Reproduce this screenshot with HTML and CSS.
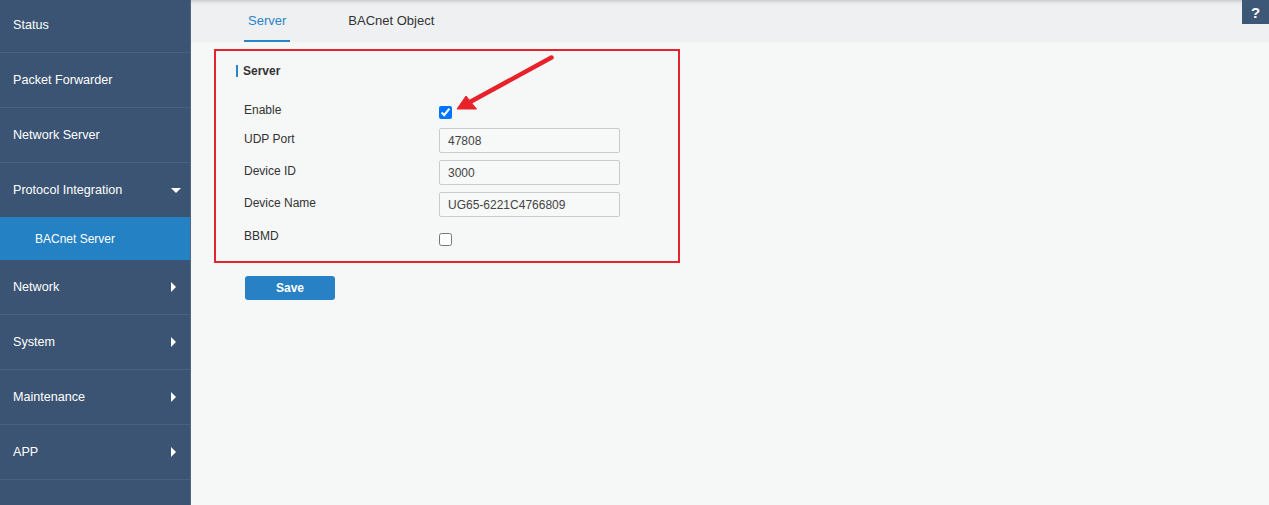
FILE: index.html
```html
<!DOCTYPE html>
<html>
<head>
<meta charset="utf-8">
<link rel="stylesheet" href="styles.css">
</head>
<body>
<div class="app">
  <nav class="sidebar">
    <ul class="menu">
      <li class="item first"><span>Status</span></li>
      <li class="item"><span>Packet Forwarder</span></li>
      <li class="item"><span>Network Server</span></li>
      <li class="item"><span>Protocol Integration</span><i class="caret-down"></i></li>
      <li class="sub active"><span>BACnet Server</span></li>
      <li class="item"><span>Network</span><i class="caret-right"></i></li>
      <li class="item"><span>System</span><i class="caret-right"></i></li>
      <li class="item"><span>Maintenance</span><i class="caret-right"></i></li>
      <li class="item"><span>APP</span><i class="caret-right"></i></li>
    </ul>
  </nav>
  <main class="main">
    <header class="tabbar">
      <div class="tab active">Server</div>
      <div class="tab">BACnet Object</div>
      <div class="help">?</div>
    </header>
    <div class="content">
      <section class="panel">
        <h2 class="panel-title">Server</h2>
        <div class="row row-enable">
          <label class="lbl">Enable</label>
          <input type="checkbox" class="chk" checked>
        </div>
        <div class="row">
          <label class="lbl">UDP Port</label>
          <input type="text" class="txt" value="47808">
        </div>
        <div class="row">
          <label class="lbl">Device ID</label>
          <input type="text" class="txt" value="3000">
        </div>
        <div class="row">
          <label class="lbl">Device Name</label>
          <input type="text" class="txt" value="UG65-6221C4766809">
        </div>
        <div class="row row-bbmd">
          <label class="lbl">BBMD</label>
          <input type="checkbox" class="chk">
        </div>
      </section>
      <button class="save">Save</button>
    </div>
    <svg class="arrow" width="120" height="70" viewBox="0 0 120 70">
      <line x1="100.5" y1="9.5" x2="19" y2="54" stroke="#e8222b" stroke-width="4.5" stroke-linecap="round"/>
      <polygon points="6,61 15,48 25.5,61" fill="#e8222b" stroke="#e8222b" stroke-width="1" stroke-linejoin="round"/>
    </svg>
  </main>
</div>
</body>
</html>
```

FILE: styles.css
```css
* { box-sizing: border-box; }
html, body { margin: 0; padding: 0; }
body {
  font-family: "Liberation Sans", Arial, sans-serif;
  color: #333;
  background: #f6f7f7;
}
.app {
  display: flex;
  height: 505px;
  overflow: hidden;
}
.sidebar {
  width: 191px;
  flex: none;
  background: #3b5473;
  border-right: 1px solid #51677f;
  overflow: hidden;
}
.menu {
  list-style: none;
  margin: -2px 0 0 0;
  padding: 0;
}
.item {
  height: 55px;
  border-bottom: 1px solid #4a6180;
  display: flex;
  align-items: center;
  justify-content: space-between;
  padding: 0 10px 0 13px;
  color: #fff;
  font-size: 12.6px;
}
.item.first { height: 55px; }
.sub {
  height: 43px;
  display: flex;
  align-items: center;
  padding-left: 35px;
  color: #fff;
  font-size: 12px;
}
.sub.active { background: #2481c3; margin-top: -1px; }
.caret-down {
  width: 0; height: 0;
  border-left: 5px solid transparent;
  border-right: 5px solid transparent;
  border-top: 5px solid #fff;
  margin-right: -1px;
}
.caret-right {
  width: 0; height: 0;
  border-top: 5px solid transparent;
  border-bottom: 5px solid transparent;
  border-left: 5px solid #fff;
  margin-right: 4px;
}
.main {
  flex: 1;
  position: relative;
  background: #f6f7f7;
}
.tabbar {
  height: 42px;
  background: linear-gradient(#c9cbce 0, #e6e8ea 3px, #eef0f2 6px, #eef0f2 100%);
  display: flex;
  align-items: stretch;
  padding-left: 53px;
  gap: 54px;
  position: relative;
}
.tab {
  font-size: 13px;
  padding: 0 4px;
  display: flex;
  align-items: center;
  color: #333;
  border-bottom: 2px solid transparent;
}
.tab.active {
  color: #2a84c8;
  border-bottom-color: #2a84c8;
}
.help {
  position: absolute;
  right: 0;
  top: 0;
  width: 27px;
  height: 24px;
  background: #3d5776;
  color: #fff;
  font-weight: bold;
  font-size: 15px;
  display: flex;
  align-items: center;
  justify-content: center;
}
.content {
  padding: 7px 0 0 23px;
}
.panel {
  width: 466px;
  height: 214px;
  border: 2px solid #e5232c;
  padding: 12px 0 0 20px;
}
.panel-title {
  margin: 2px 0 24px 0;
  font-size: 12px;
  font-weight: bold;
  line-height: 16px;
  color: #333;
  border-left: 2px solid #2a84c8;
  padding-left: 5px;
  height: 12px;
  display: flex;
  align-items: center;
}
.row {
  display: flex;
  align-items: flex-start;
  padding-left: 8px;
  margin-bottom: 7px;
  min-height: 25px;
}
.lbl {
  width: 195px;
  flex: none;
  font-size: 12px;
  line-height: 16px;
  padding-top: 3px;
  color: #333;
}
.row-enable { min-height: 20px; }
.row-enable .lbl { padding-top: 1px; }
.row-enable .chk { margin-top: 5px; }
.row-bbmd .lbl { padding-top: 4px; }
.row-bbmd .chk { margin-top: 9px; }
.chk {
  width: 13px;
  height: 13px;
  margin: 0;
}
.txt {
  width: 181px;
  height: 25px;
  border: 1px solid #c9cbcd;
  border-radius: 2px;
  background: #f7f8f8;
  padding: 0 8px;
  font-family: "Liberation Sans", Arial, sans-serif;
  font-size: 12px;
  color: #444;
  margin: 0;
}
.save {
  display: block;
  margin: 13px 0 0 31px;
  width: 90px;
  height: 24px;
  border: none;
  border-radius: 3px;
  background: #2881c4;
  color: #fff;
  font-family: "Liberation Sans", Arial, sans-serif;
  font-weight: bold;
  font-size: 12px;
}
.arrow {
  position: absolute;
  left: 260px;
  top: 48px;
}
```
